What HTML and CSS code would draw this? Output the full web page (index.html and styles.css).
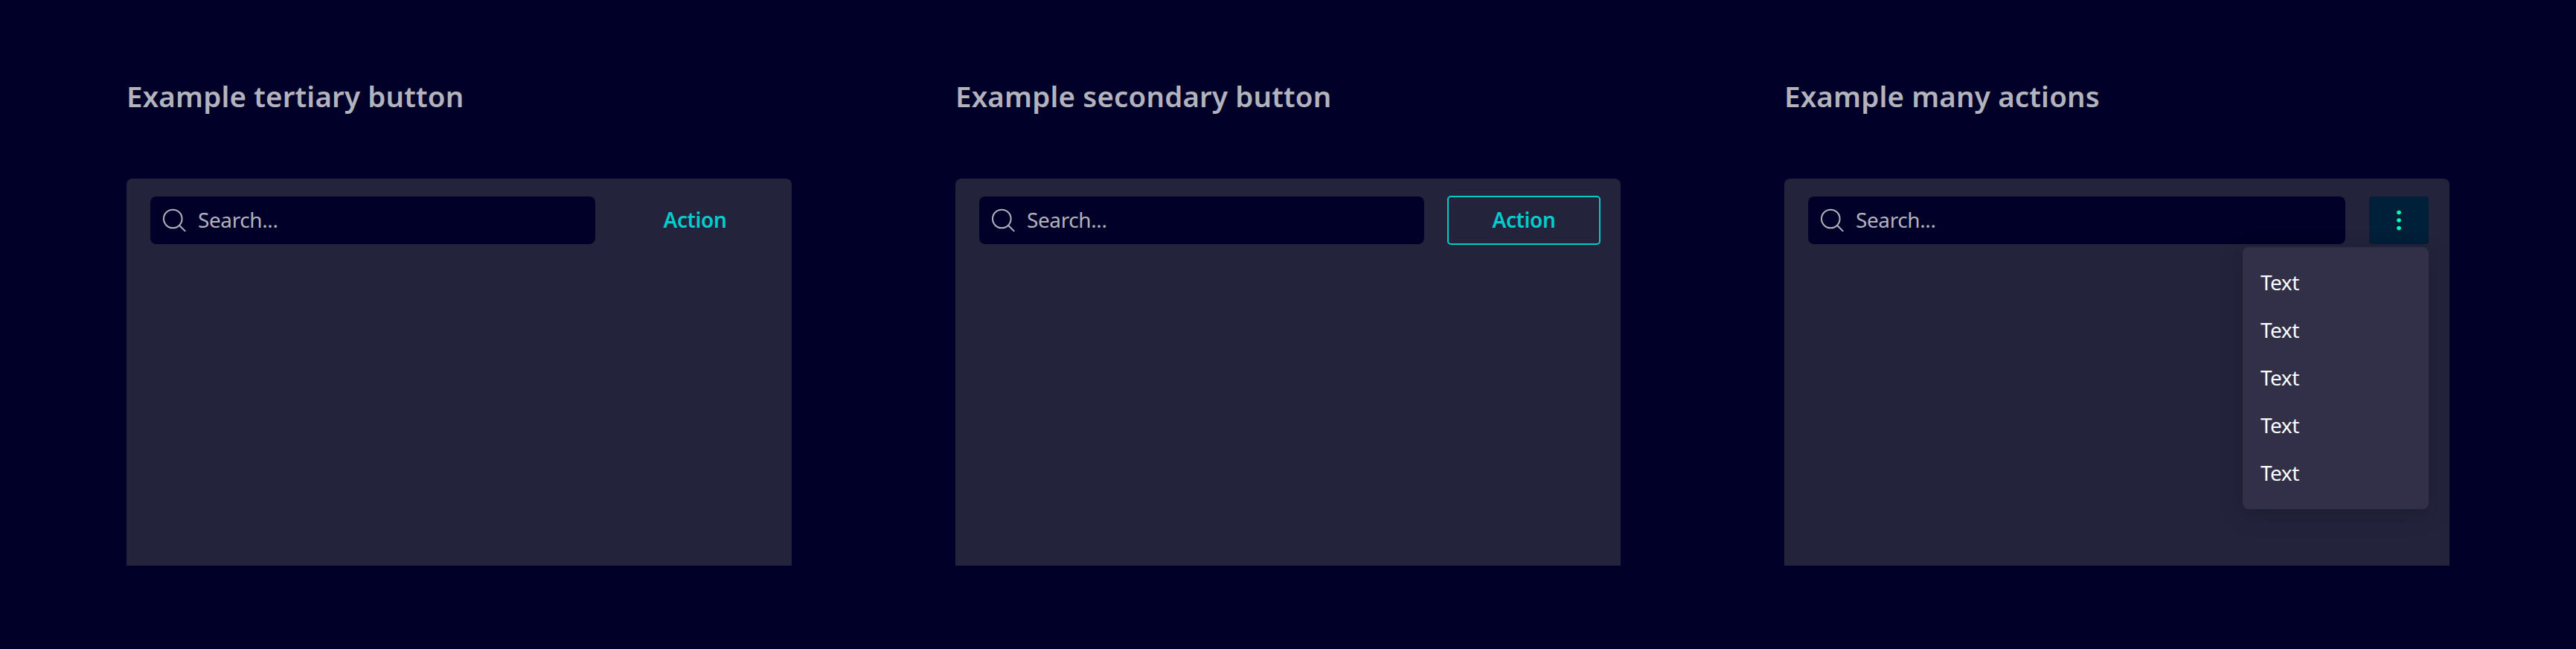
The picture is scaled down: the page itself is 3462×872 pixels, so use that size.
FILE: index.html
```html
<!DOCTYPE html>
<html lang="en">
<head>
<meta charset="utf-8">
<title>Action bar examples</title>
<link rel="stylesheet" href="styles.css">
</head>
<body>
<main class="examples">
  <section class="example">
    <h2 class="title">Example tertiary button</h2>
    <div class="card">
      <div class="search">
        <svg class="search-icon" viewBox="0 0 32 32"><circle cx="14.3" cy="14" r="12.3"/><path d="M23 22.7 31.2 30.9"/></svg>
        <span class="placeholder">Search...</span>
      </div>
      <button class="action">Action</button>
    </div>
  </section>
  <section class="example">
    <h2 class="title">Example secondary button</h2>
    <div class="card">
      <div class="search">
        <svg class="search-icon" viewBox="0 0 32 32"><circle cx="14.3" cy="14" r="12.3"/><path d="M23 22.7 31.2 30.9"/></svg>
        <span class="placeholder">Search...</span>
      </div>
      <button class="action action-secondary">Action</button>
    </div>
  </section>
  <section class="example">
    <h2 class="title">Example many actions</h2>
    <div class="card">
      <div class="search">
        <svg class="search-icon" viewBox="0 0 32 32"><circle cx="14.3" cy="14" r="12.3"/><path d="M23 22.7 31.2 30.9"/></svg>
        <span class="placeholder">Search...</span>
      </div>
      <div class="more">
        <button class="more-button" aria-label="More actions">
          <svg class="more-icon" viewBox="0 0 32 32"><circle cx="16" cy="5.5" r="2.8"/><circle cx="16" cy="16" r="2.8"/><circle cx="16" cy="26.5" r="2.8"/></svg>
        </button>
        <ul class="menu">
          <li class="menu-item">Text</li>
          <li class="menu-item">Text</li>
          <li class="menu-item">Text</li>
          <li class="menu-item">Text</li>
          <li class="menu-item">Text</li>
        </ul>
      </div>
    </div>
  </section>
</main>
</body>
</html>
```
FILE: styles.css
```css
* {
  box-sizing: border-box;
}

body {
  margin: 0;
  background: #000028;
  font-family: "Noto Sans", "Open Sans", sans-serif;
}

.examples {
  display: flex;
  gap: 220px;
  height: 872px;
  padding: 100px 170px 112px;
}

.example {
  display: flex;
  flex-direction: column;
  gap: 80px;
  width: 894px;
}

.title {
  margin: 0;
  height: 60px;
  font-size: 38.5px;
  line-height: 58px;
  font-weight: 600;
  letter-spacing: 0.15px;
  color: #b3b3be;
  white-space: nowrap;
}

.card {
  display: flex;
  align-items: flex-start;
  gap: 32px;
  height: 520px;
  padding: 24px 28px 0 32px;
  border-radius: 8px 8px 0 0;
  background: #23233c;
}

.search {
  flex: 1;
  display: flex;
  align-items: center;
  gap: 16px;
  height: 64px;
  padding-left: 16px;
  border-radius: 8px;
  background: #000028;
}

.search-icon {
  width: 32px;
  height: 32px;
  fill: none;
  stroke: #b3b3be;
  stroke-width: 2;
}

.placeholder {
  padding-bottom: 2px;
  font-size: 28px;
  line-height: 40px;
  font-weight: 400;
  letter-spacing: -0.4px;
  color: #b3b3be;
}

.action {
  width: 204px;
  height: 64px;
  padding: 0 0 2px;
  border: 0;
  border-radius: 4px;
  background: transparent;
  color: #00cccc;
  font: 600 28px/40px "Noto Sans", "Open Sans", sans-serif;
  letter-spacing: -0.4px;
}

.action-secondary {
  outline: 2px solid #00cccc;
  outline-offset: -1px;
}

.more {
  position: relative;
  width: 80px;
}

.more-button {
  display: flex;
  align-items: center;
  justify-content: center;
  width: 80px;
  height: 64px;
  padding: 0;
  border: 0;
  border-radius: 4px;
  background: #001f39;
}

.more-icon {
  width: 32px;
  height: 32px;
  fill: #00ffb9;
}

.menu {
  position: absolute;
  top: 68px;
  right: 0;
  width: 250px;
  height: 352px;
  margin: 0;
  padding: 16px 24px;
  list-style: none;
  border-radius: 8px;
  background: #313048;
  box-shadow: 0 4px 16px rgba(0, 0, 0, 0.1), 0 8px 36px rgba(0, 0, 0, 0.1);
}

.menu-item {
  height: 64px;
  font-size: 28px;
  line-height: 63px;
  font-weight: 400;
  letter-spacing: -0.5px;
  color: #ffffff;
}
```
